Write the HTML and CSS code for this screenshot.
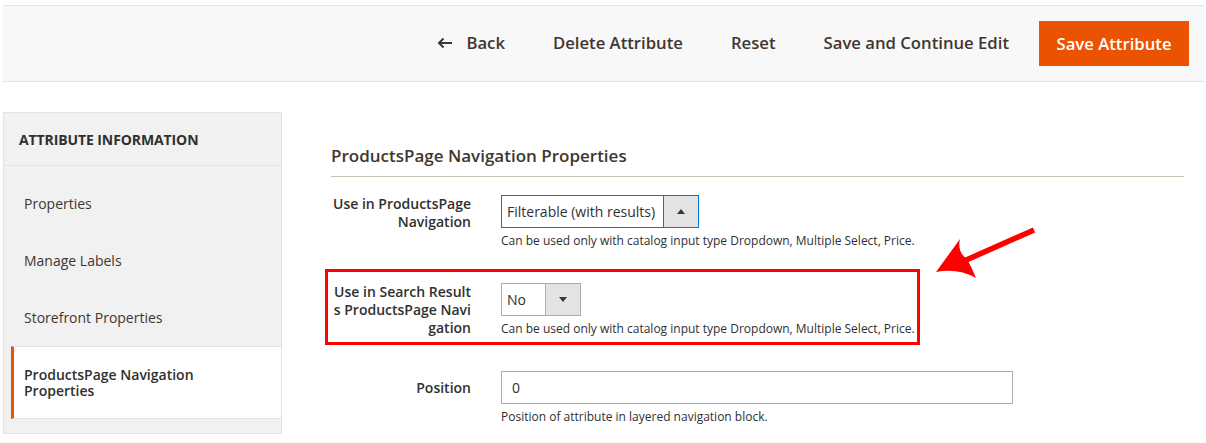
FILE: index.html
```html
<!DOCTYPE html>
<html lang="en">
<head>
<meta charset="utf-8">
<title>Edit Attribute</title>
<link rel="stylesheet" href="styles.css">
</head>
<body>
<header class="page-actions">
  <div class="actions">
    <span class="btn-link back">
      <svg class="back-icon" width="16" height="12" viewBox="0 0 16 12" aria-hidden="true">
        <path d="M15 6H2M6.5 1.5L2 6l4.5 4.5" fill="none" stroke="#41362f" stroke-width="2"/>
      </svg>Back</span>
    <span class="btn-link">Delete Attribute</span>
    <span class="btn-link">Reset</span>
    <span class="btn-link">Save and Continue Edit</span>
    <span class="btn-primary">Save Attribute</span>
  </div>
</header>

<div class="layout">
  <aside class="nav">
    <div class="nav-title">ATTRIBUTE INFORMATION</div>
    <ul class="nav-items">
      <li class="nav-item">Properties</li>
      <li class="nav-item">Manage Labels</li>
      <li class="nav-item">Storefront Properties</li>
      <li class="nav-item active">ProductsPage Navigation Properties</li>
    </ul>
  </aside>

  <main class="content">
    <h2 class="fieldset-title">ProductsPage Navigation Properties</h2>

    <div class="field">
      <div class="label">Use in ProductsPage Navigation</div>
      <div class="control">
        <div class="select select-focus select-wide">
          <span class="select-value">Filterable (with results)</span>
          <span class="select-btn"><span class="tri tri-up"></span></span>
        </div>
        <div class="note">Can be used only with catalog input type Dropdown, Multiple Select, Price.</div>
      </div>
    </div>

    <div class="field">
      <div class="label label-break">Use in Search Results ProductsPage Navigation</div>
      <div class="control">
        <div class="select select-narrow">
          <span class="select-value">No</span>
          <span class="select-btn"><span class="tri tri-down"></span></span>
        </div>
        <div class="note">Can be used only with catalog input type Dropdown, Multiple Select, Price.</div>
      </div>
    </div>

    <div class="field">
      <div class="label label-single">Position</div>
      <div class="control">
        <div class="input">0</div>
        <div class="note">Position of attribute in layered navigation block.</div>
      </div>
    </div>

    <div class="highlight"></div>
    <svg class="annot-arrow" width="110" height="65" viewBox="930 220 110 65" aria-hidden="true">
      <line x1="964" y1="261" x2="1034" y2="230" stroke="#ff0000" stroke-width="5.5"/>
      <path d="M936 272 L960 239 Q957 252 967 259 Q972 268 976 278 Q958 268 936 272 Z" fill="#ff0000"/>
    </svg>
  </main>
</div>
</body>
</html>
```

FILE: styles.css
```css
* { box-sizing: border-box; }

html, body {
  margin: 0;
  padding: 0;
  background: #ffffff;
}

body {
  font-family: "Open Sans", "Liberation Sans", Arial, sans-serif;
  color: #303030;
  width: 1206px;
  height: 443px;
  overflow: hidden;
}

/* ---------- header actions ---------- */
.page-actions {
  margin: 5px 2px 0 3px;
  height: 77px;
  background: #f8f8f8;
  border-top: 1px solid #e3e3e3;
  border-bottom: 1px solid #e3e3e3;
  display: flex;
  justify-content: flex-end;
  align-items: center;
  padding-right: 15px;
}

.actions {
  display: flex;
  align-items: center;
  margin-top: -1px;
}

.btn-link {
  font-size: 16.7px;
  font-weight: 600;
  color: #41362f;
  margin-left: 48px;
  display: inline-flex;
  align-items: center;
  line-height: 20px;
}

.btn-link.back { margin-left: 0; }

.back-icon {
  margin-right: 13px;
}

.btn-primary {
  margin-left: 30px;
  height: 45px;
  width: 150px;
  justify-content: center;
  background: #eb5202;
  color: #ffffff;
  font-size: 16.7px;
  font-weight: 600;
  display: inline-flex;
  align-items: center;
}

/* ---------- layout ---------- */
.layout {
  display: flex;
  align-items: flex-start;
  margin-top: 30px;
}

/* ---------- side nav ---------- */
.nav {
  margin-left: 3px;
  width: 279px;
  flex: none;
  background: #f1f1f1;
  border: 1px solid #e3e3e3;
  padding-bottom: 14px;
}

.nav-title {
  height: 53px;
  border-bottom: 1px solid #e3e3e3;
  padding-left: 15px;
  display: flex;
  align-items: center;
  font-size: 14px;
  font-weight: 700;
  color: #303030;
  letter-spacing: -0.1px;
}

.nav-items {
  list-style: none;
  margin: 0;
  padding: 9px 0 0;
}

.nav-item {
  margin-left: 7px;
  height: 57px;
  border-left: 3px solid transparent;
  padding: 0 60px 0 10px;
  display: flex;
  align-items: center;
  font-size: 14px;
  color: #41362f;
  line-height: 16px;
}

.nav-item.active {
  height: 73px;
  background: #ffffff;
  border-left-color: #eb5202;
  border-top: 1px solid #e3e3e3;
  border-bottom: 1px solid #e3e3e3;
  font-weight: 600;
  color: #303030;
}

/* ---------- content ---------- */
.content {
  position: relative;
  flex: 1;
  margin-left: 49px;
  margin-right: 22px;
  padding-top: 33px;
}

.fieldset-title {
  margin: 0 0 18px;
  font-size: 17px;
  font-weight: 600;
  line-height: 22px;
  color: #41362f;
  padding-bottom: 9px;
  border-bottom: 1px solid #cac3b4;
}

.field {
  display: grid;
  grid-template-columns: 140px 1fr;
  column-gap: 30px;
  margin-bottom: 34px;
}

.label {
  text-align: right;
  font-size: 14px;
  font-weight: 600;
  line-height: 18px;
  color: #303030;
}

.label-break { word-break: break-all; }

.label-single { padding-top: 8px; }

.control {
  display: flex;
  flex-direction: column;
  align-items: flex-start;
}

.select {
  display: flex;
  height: 33px;
  border: 1px solid #adadad;
  background: #ffffff;
  font-size: 14px;
  color: #303030;
}

.select-focus { border-color: #007bdb; }

.select-wide { width: 198px; }
.select-narrow { width: 80px; }

.select-value {
  flex: 1;
  display: flex;
  align-items: center;
  padding-left: 5px;
  white-space: nowrap;
}

.select-btn {
  width: 35px;
  flex: none;
  background: #e3e3e3;
  border-left: 1px solid #adadad;
  display: flex;
  align-items: center;
  justify-content: center;
}

.select-focus .select-btn { border-left-color: #007bdb; }

.tri {
  width: 0;
  height: 0;
  border-left: 4px solid transparent;
  border-right: 4px solid transparent;
}

.tri-up { border-bottom: 5px solid #41362f; }
.tri-down { border-top: 5px solid #41362f; }

.input {
  width: 512px;
  height: 33px;
  border: 1px solid #adadad;
  padding-left: 10px;
  display: flex;
  align-items: center;
  font-size: 14px;
  color: #303030;
}

.note {
  margin-top: 5px;
  font-size: 12px;
  line-height: 16px;
  color: #303030;
}

/* ---------- annotations ---------- */
.highlight {
  position: absolute;
  left: -6px;
  top: 157px;
  width: 595px;
  height: 76px;
  border: 3px solid #ff0000;
  pointer-events: none;
}

.annot-arrow {
  position: absolute;
  left: 599px;
  top: 108px;
}
```
